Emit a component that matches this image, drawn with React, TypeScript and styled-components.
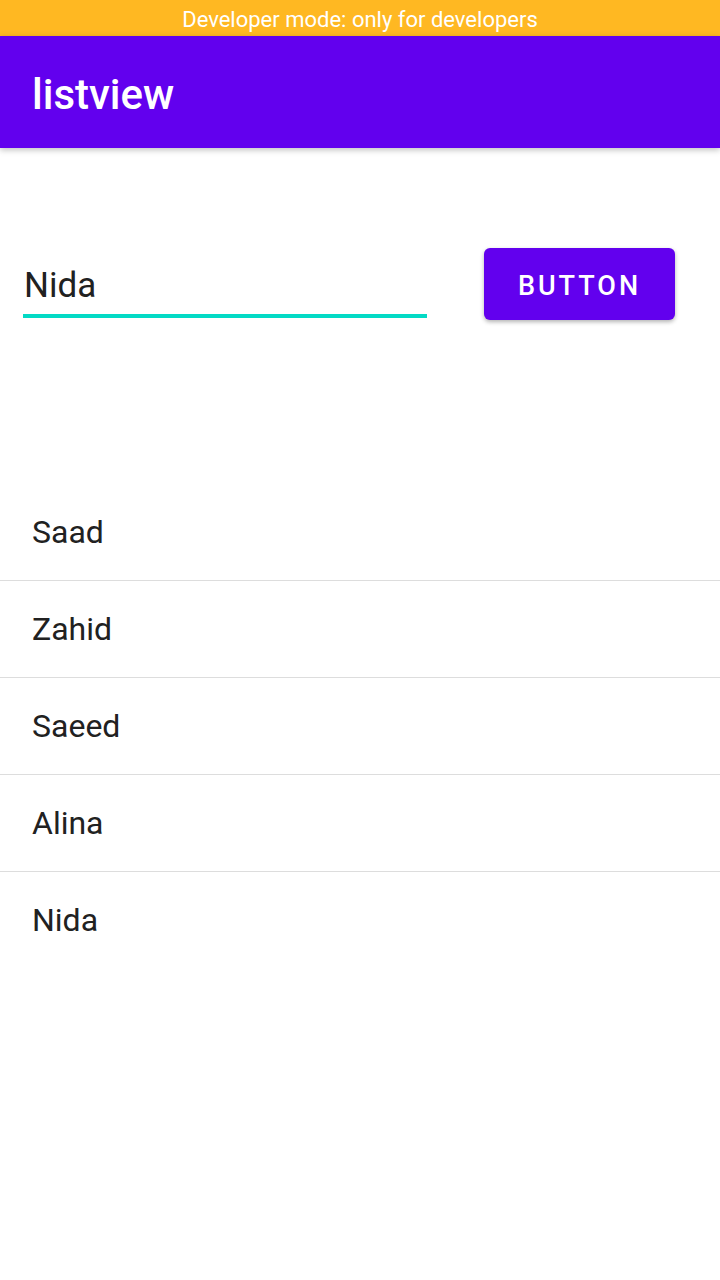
import React from "react";
import styled, { createGlobalStyle } from "styled-components";

const GlobalStyle = createGlobalStyle`
  html, body {
    margin: 0;
    padding: 0;
    background: #ffffff;
    font-family: Roboto, "Noto Sans", sans-serif;
  }
`;

const Screen = styled.div`
  width: 720px;
  height: 1280px;
  display: flex;
  flex-direction: column;
  background: #ffffff;
  overflow: hidden;
`;

const StatusBar = styled.div`
  height: 36px;
  background: #ffb822;
  color: #ffffff;
  font-size: 22px;
  padding-top: 2px;
  box-sizing: border-box;
  display: flex;
  align-items: center;
  justify-content: center;
`;

const AppBar = styled.header`
  height: 112px;
  background: #6200ee;
  color: #ffffff;
  display: flex;
  align-items: center;
  padding: 4px 0 0 32px;
  box-sizing: border-box;
  font-size: 42px;
  font-weight: 500;
  box-shadow: 0 2px 6px rgba(0, 0, 0, 0.25);
  position: relative;
  z-index: 1;
`;

const FormRow = styled.div`
  display: flex;
  align-items: flex-start;
  padding: 100px 45px 0 23px;
  justify-content: space-between;
`;

const Field = styled.div`
  width: 404px;
  height: 70px;
  display: flex;
  align-items: flex-end;
  border-bottom: 4px solid #03dac5;
  box-sizing: border-box;
`;

const FieldText = styled.span`
  font-size: 35px;
  color: #212121;
  padding-bottom: 8px;
  padding-left: 1px;
`;

const Button = styled.button`
  width: 191px;
  height: 72px;
  border: none;
  border-radius: 6px;
  background: #6200ee;
  color: #ffffff;
  font-family: Roboto, sans-serif;
  font-size: 27px;
  font-weight: 500;
  letter-spacing: 3px;
  padding-top: 4px;
  box-shadow: 0 2px 4px rgba(0, 0, 0, 0.3);
`;

const List = styled.ul`
  list-style: none;
  margin: 164px 0 0 0;
  padding: 0;
`;

const Row = styled.li<{ last?: boolean }>`
  height: 96px;
  display: flex;
  align-items: center;
  padding-left: 32px;
  font-size: 32px;
  color: #212121;
  border-bottom: ${({ last }) => (last ? "none" : "1px solid #dddddd")};
`;

const names = ["Saad", "Zahid", "Saeed", "Alina", "Nida"];

export default function App() {
  return (
    <Screen>
      <GlobalStyle />
      <StatusBar>Developer mode: only for developers</StatusBar>
      <AppBar>listview</AppBar>
      <FormRow>
        <Field>
          <FieldText>Nida</FieldText>
        </Field>
        <Button>BUTTON</Button>
      </FormRow>
      <List>
        {names.map((n, i) => (
          <Row key={n} last={i === names.length - 1}>
            {n}
          </Row>
        ))}
      </List>
    </Screen>
  );
}
